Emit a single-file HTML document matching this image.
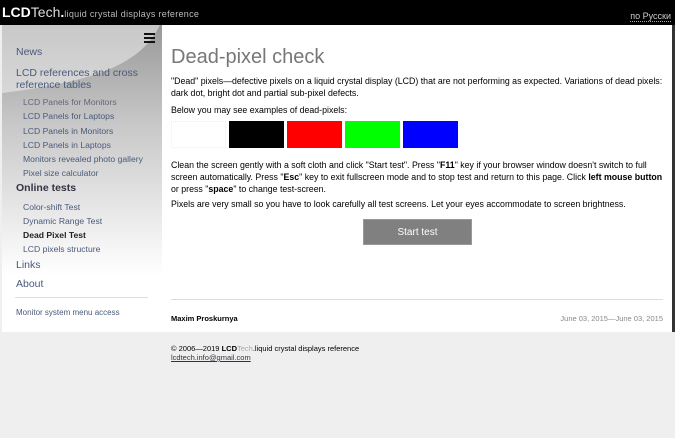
<!DOCTYPE html>
<html><head><meta charset="utf-8"><style>
*{margin:0;padding:0;box-sizing:border-box}
body{width:675px;height:438px;background:#efefef;font-family:"Liberation Sans",Arial,sans-serif;position:relative;overflow:hidden;color:#000}
#hdr{position:absolute;left:0;top:0;width:675px;height:25px;background:#000}
#logo{position:absolute;left:2px;top:4px;color:#fff;font-size:14px;font-weight:bold}
#logo span{font-weight:normal;color:#ddd}
#logo small{font-size:9px;font-weight:normal;color:#bbb;letter-spacing:.3px}
#ru{position:absolute;right:4px;top:11px;color:#ccc;font-size:9px;border-bottom:1px dotted #aaa}
#rs{position:absolute;right:0;top:25px;width:3px;height:307px;background:#333}
#main{position:absolute;left:2px;top:25px;width:670px;height:307px;background:#fff}
#side{position:absolute;left:2px;top:25px;width:160px;height:307px;background:linear-gradient(#999 0,#c8c8c8 100px,#fff 250px,#fff)}
#side svg{position:absolute;left:0;top:0}
.nav div{position:absolute;white-space:nowrap;color:#4a5a7a}
.l1{font-size:10.5px}
.l2{font-size:8.6px;color:#556}
#burger{position:absolute;left:144px;top:33px;width:11px}
#burger i{display:block;height:2px;background:#111;margin-bottom:2px}
.c{position:absolute;left:171px;font-size:8.8px;line-height:12px;white-space:nowrap}
h1{position:absolute;left:171px;top:46px;font-size:20px;font-weight:normal;color:#777}
.box{position:absolute;top:121px;width:55px;height:27px}
#btn{position:absolute;left:363px;top:219px;width:109px;height:26px;background:#808080;color:#fff;font-size:10px;text-align:center;line-height:26px;border:1px solid #999}
#hr{position:absolute;left:171px;top:299px;width:492px;height:1px;background:#ddd}
#hr2{position:absolute;left:15px;top:297px;width:133px;height:1px;background:#ddd}
</style></head><body>
<div id="hdr"><div id="logo">LCD<span>Tech</span>.<small>liquid crystal displays reference</small></div><div id="ru">по Русски</div></div>
<div id="main"></div>
<div id="rs"></div>
<div id="side"><svg width="160" height="120"><defs><linearGradient id="g" x1="0" y1="0" x2="0" y2="1"><stop offset="0" stop-color="#c8c8c8"/><stop offset="1" stop-color="#d8d8d8"/></linearGradient></defs><path d="M0 0 H158 C140 35 105 55 0 68 Z" fill="url(#g)"/></svg></div>
<div id="burger"><i></i><i></i><i></i></div>
<div class="nav">
<div class="l1" style="top:46px;left:16px">News</div>
<div class="l1" style="top:67px;left:16px;line-height:12px">LCD references and cross<br>reference tables</div>
<div class="l2" style="top:97px;left:23px;color:#667">LCD Panels for Monitors</div>
<div class="l2" style="top:111px;left:23px">LCD Panels for Laptops</div>
<div class="l2" style="top:126px;left:23px">LCD Panels in Monitors</div>
<div class="l2" style="top:140px;left:23px">LCD Panels in Laptops</div>
<div class="l2" style="top:154px;left:23px">Monitors revealed photo gallery</div>
<div class="l2" style="top:168px;left:23px">Pixel size calculator</div>
<div class="l1" style="top:182px;left:16px;font-weight:bold;color:#334">Online tests</div>
<div class="l2" style="top:202px;left:23px">Color-shift Test</div>
<div class="l2" style="top:216px;left:23px">Dynamic Range Test</div>
<div class="l2" style="top:230px;left:23px;font-weight:bold;color:#222">Dead Pixel Test</div>
<div class="l2" style="top:244px;left:23px">LCD pixels structure</div>
<div class="l1" style="top:259px;left:16px">Links</div>
<div class="l1" style="top:278px;left:16px">About</div>
<div class="l2" style="top:308px;left:16px;font-size:8px">Monitor system menu access</div>
</div>
<div id="hr2"></div>
<h1>Dead-pixel check</h1>
<div class="c" style="top:75px">"Dead" pixels—defective pixels on a liquid crystal display (LCD) that are not performing as expected. Variations of dead pixels:<br>dark dot, bright dot and partial sub-pixel defects.</div>
<div class="c" style="top:104px">Below you may see examples of dead-pixels:</div>
<div class="box" style="left:171px;border:1px dotted #eee;background:#fff"></div>
<div class="box" style="left:229px;background:#000"></div>
<div class="box" style="left:287px;background:#f00"></div>
<div class="box" style="left:345px;background:#0f0"></div>
<div class="box" style="left:403px;background:#00f"></div>
<div class="c" style="top:159px">Clean the screen gently with a soft cloth and click "Start test". Press "<b>F11</b>" key if your browser window doesn't switch to full<br>screen automatically. Press "<b>Esc</b>" key to exit fullscreen mode and to stop test and return to this page. Click <b>left mouse button</b><br>or press "<b>space</b>" to change test-screen.</div>
<div class="c" style="top:198px">Pixels are very small so you have to look carefully all test screens. Let your eyes accommodate to screen brightness.</div>
<div id="btn">Start test</div>
<div id="hr"></div>
<div class="c" style="top:313px;font-size:7.5px;font-weight:bold">Maxim Proskurnya</div>
<div class="c" style="top:313px;left:auto;right:12px;font-size:7.5px;color:#888">June 03, 2015—June 03, 2015</div>
<div class="c" style="top:344px;font-size:7.5px;line-height:9px">© 2006—2019 <b>LCD</b><span style="color:#aaa">Tech</span>.liquid crystal displays reference<br><span style="color:#334;text-decoration:underline">lcdtech.info@gmail.com</span></div>
</body></html>
